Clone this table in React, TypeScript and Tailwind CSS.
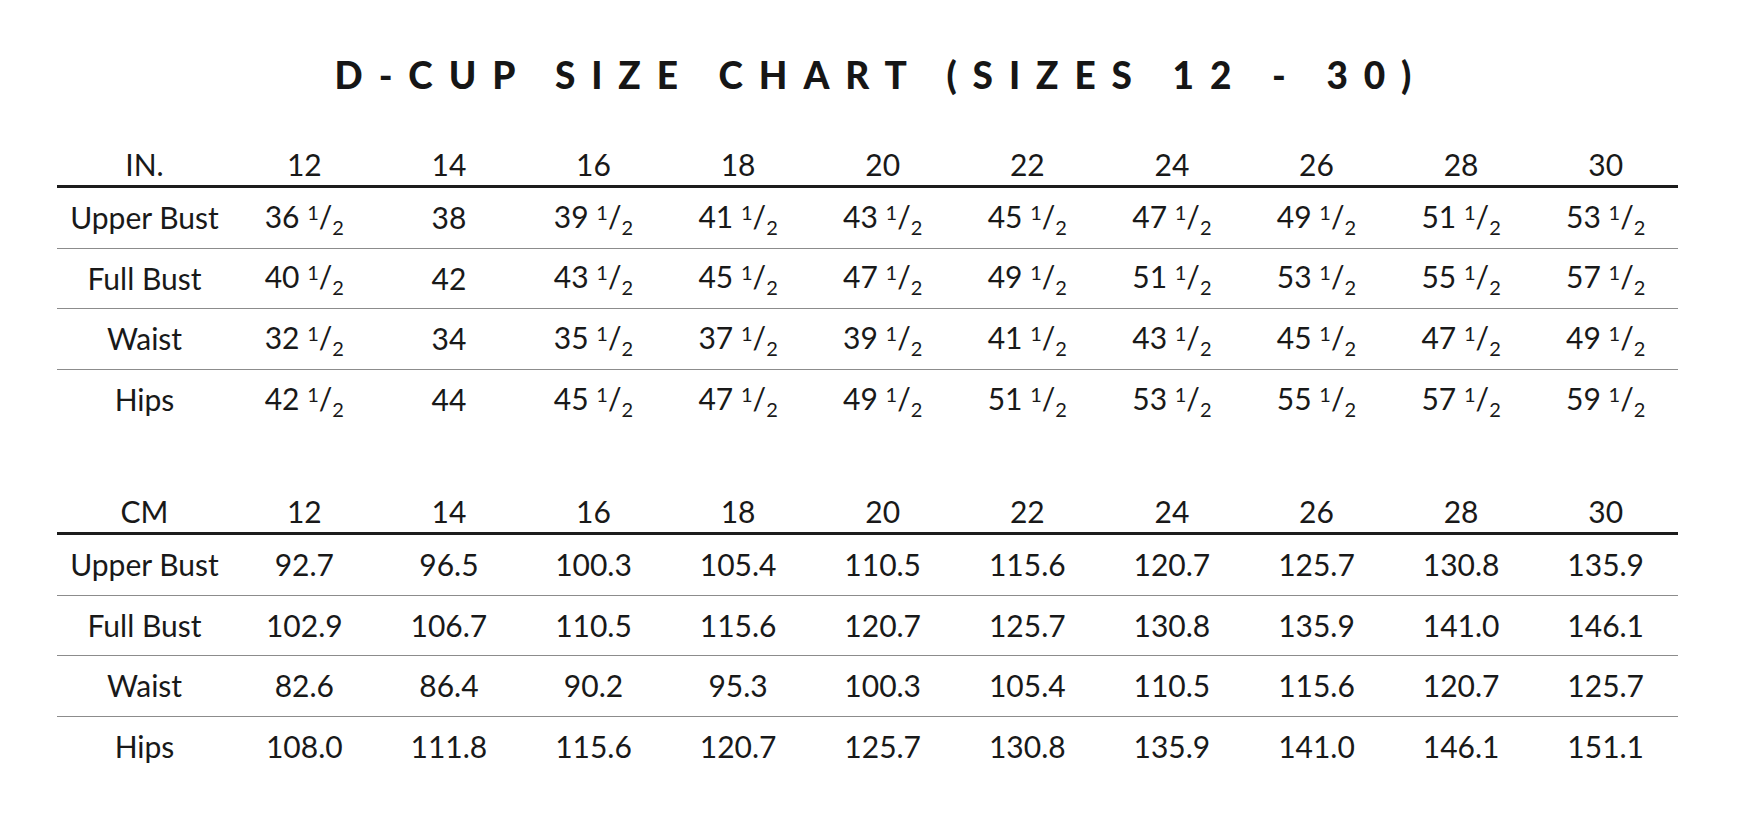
import React from "react";

const sizes = ["12", "14", "16", "18", "20", "22", "24", "26", "28", "30"];

type Row = { label: string; values: string[] };

const inchRows: Row[] = [
  { label: "Upper Bust", values: ["36h", "38", "39h", "41h", "43h", "45h", "47h", "49h", "51h", "53h"] },
  { label: "Full Bust", values: ["40h", "42", "43h", "45h", "47h", "49h", "51h", "53h", "55h", "57h"] },
  { label: "Waist", values: ["32h", "34", "35h", "37h", "39h", "41h", "43h", "45h", "47h", "49h"] },
  { label: "Hips", values: ["42h", "44", "45h", "47h", "49h", "51h", "53h", "55h", "57h", "59h"] },
];

const cmRows: Row[] = [
  { label: "Upper Bust", values: ["92.7", "96.5", "100.3", "105.4", "110.5", "115.6", "120.7", "125.7", "130.8", "135.9"] },
  { label: "Full Bust", values: ["102.9", "106.7", "110.5", "115.6", "120.7", "125.7", "130.8", "135.9", "141.0", "146.1"] },
  { label: "Waist", values: ["82.6", "86.4", "90.2", "95.3", "100.3", "105.4", "110.5", "115.6", "120.7", "125.7"] },
  { label: "Hips", values: ["108.0", "111.8", "115.6", "120.7", "125.7", "130.8", "135.9", "141.0", "146.1", "151.1"] },
];

function Value({ v }: { v: string }) {
  if (v.endsWith("h")) {
    return (
      <span className="whitespace-nowrap">
        {v.slice(0, -1)}{" "}
        <span className="text-[20px] align-[0.4em]">1</span>
        <span>/</span>
        <span className="text-[20px] align-[-0.34em]">2</span>
      </span>
    );
  }
  return <span>{v}</span>;
}

function Table({ unit, rows }: { unit: string; rows: Row[] }) {
  return (
    <div className="w-[1621px]">
      <div className="grid grid-cols-[175px_repeat(10,1fr)] h-[46px] border-b-[3px] border-[#1c1c1c] items-center">
        <div className="text-center">{unit}</div>
        {sizes.map((s) => (
          <div key={s} className="text-center">{s}</div>
        ))}
      </div>
      {rows.map((r, i) => (
        <div
          key={r.label}
          className={
            "grid grid-cols-[175px_repeat(10,1fr)] h-[60.5px] items-center " +
            (i < rows.length - 1 ? "border-b border-[#8c8c8c]" : "")
          }
        >
          <div className="text-center whitespace-nowrap">{r.label}</div>
          {r.values.map((v, j) => (
            <div key={j} className="text-center">
              <Value v={v} />
            </div>
          ))}
        </div>
      ))}
    </div>
  );
}

export default function App() {
  return (
    <div className="w-[1746px] h-[818px] bg-white text-[#191919] overflow-hidden">
      <div className="pt-[56px] flex justify-center">
        <h1 className="text-[37px] leading-[37px] font-black tracking-[0.43em] pl-[0.43em] text-[#161616] [font-family:'Lato',sans-serif]">
          D-CUP SIZE CHART (SIZES 12 - 30)
        </h1>
      </div>
      <div className="ml-[57px] mt-[49px] text-[30px] [font-family:'Lato',sans-serif] flex flex-col gap-[59px]">
        <Table unit="IN." rows={inchRows} />
        <Table unit="CM" rows={cmRows} />
      </div>
    </div>
  );
}
